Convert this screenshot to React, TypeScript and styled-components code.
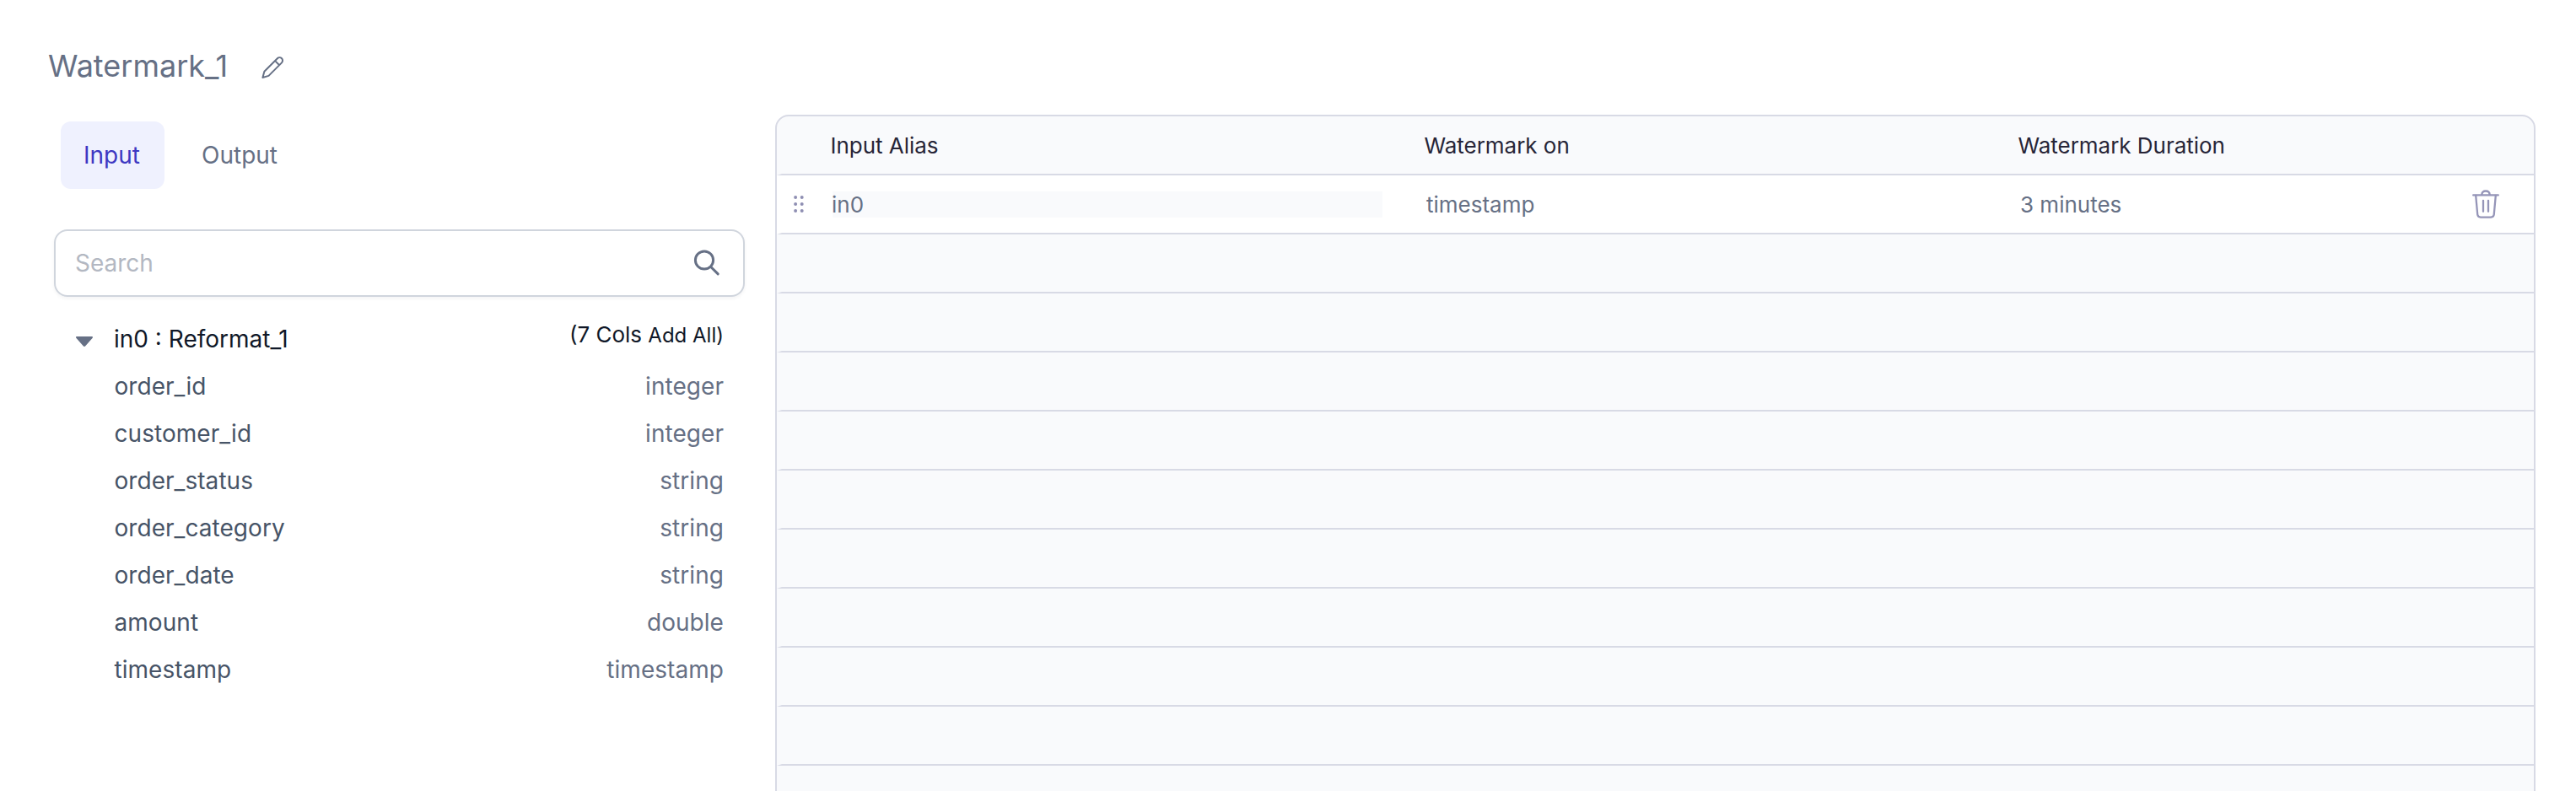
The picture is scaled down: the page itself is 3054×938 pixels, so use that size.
import React from "react";
import styled, { createGlobalStyle } from "styled-components";

const GlobalStyle = createGlobalStyle`
  * { box-sizing: border-box; }
  body { margin: 0; background: #fff; font-family: Inter, "Liberation Sans", sans-serif; }
`;

const Page = styled.main`
  display: flex;
  height: 938px;
  overflow: hidden;
  background: #fff;
`;
const Sidebar = styled.aside`
  width: 919px;
  flex: none;
  padding: 48px 36px 0 57px;
`;
const TitleBar = styled.header`
  display: flex;
  align-items: center;
  height: 60px;
`;
const Title = styled.h1`
  margin: 0;
  width: 252px;
  font-size: 36px;
  font-weight: 400;
  line-height: 60px;
  color: #667085;
`;
const EditButton = styled.button`
  display: flex;
  padding: 4px 0 0;
  border: 0;
  background: none;
`;
const Tabs = styled.nav`
  display: flex;
  gap: 17px;
  margin: 36px 0 0 15px;
`;
const Tab = styled.button<{ $active?: boolean }>`
  height: 80px;
  padding: 0 28px 0 27px;
  min-width: 123px;
  text-align: left;
  border: 0;
  border-radius: 12px;
  font: 400 28px/80px Inter, sans-serif;
  color: ${(p) => (p.$active ? "#3d38c2" : "#667085")};
  background: ${(p) => (p.$active ? "#eff1fe" : "transparent")};
`;
const SearchBox = styled.label`
  display: flex;
  align-items: center;
  justify-content: space-between;
  width: 819px;
  height: 80px;
  margin: 48px 0 22px 7px;
  padding: 0 27px 0 23px;
  border: 2px solid #d0d5dd;
  border-radius: 16px;
  box-shadow: 0 2px 4px rgba(16, 24, 40, 0.05);
`;
const SearchInput = styled.input`
  flex: 1;
  min-width: 0;
  padding: 0;
  border: 0;
  outline: 0;
  font: 400 28px/40px Inter, sans-serif;
  color: #101828;
  &::placeholder { color: #b3b8c2; opacity: 1; }
`;
const Tree = styled.section`
  margin: 0 0 0 33px;
  width: 768px;
  font-size: 28px;
`;
const TreeRow = styled.div`
  display: flex;
  height: 56px;
  line-height: 56px;
`;
const Toggle = styled.span`
  display: flex;
  align-items: center;
  width: 45px;
  padding-top: 6px;
`;
const SourceName = styled.span`
  flex: 1;
  color: #101828;
`;
const Summary = styled.span`
  height: 45px;
  font-size: 26px;
  line-height: 45px;
  color: #101828;
`;
const AddAll = styled.span`
  font-size: 24px;
`;
const FieldName = styled.span`
  flex: 1;
  padding-left: 45.5px;
  letter-spacing: 0.05px;
  color: #475467;
`;
const FieldType = styled.span`
  letter-spacing: 0.05px;
  color: #667085;
`;
const Table = styled.section`
  width: 2087px;
  height: 820px;
  flex: none;
  margin-top: 136px;
  border: 2px solid #d8dae5;
  border-radius: 16px;
  background: #f9fafc;
  overflow: hidden;
  font-size: 26px;
`;
const Row = styled.div<{ $filled?: boolean }>`
  display: grid;
  grid-template-columns: 57px 704px 704px 539px 1fr;
  align-items: center;
  height: 70px;
  border-bottom: 2px solid #d8dae5;
  border-left: 6px solid transparent;
  background: ${(p) => (p.$filled ? "#fff" : "transparent")};
`;
const HeadCell = styled.span`
  letter-spacing: -0.03px;
  padding-left: 0.5px;
  color: #272537;
`;
const Cell = styled.span`
  padding-left: 3px;
  color: #667085;
`;
const AliasValue = styled.span`
  display: block;
  width: 652px;
  height: 31px;
  margin-left: 3px;
  line-height: 31px;
  text-indent: -1px;
  color: #667085;
  background: #f9fafc;
`;
const Handle = styled.span`
  display: flex;
  padding-left: 14px;
`;
const DeleteButton = styled.button`
  display: flex;
  padding: 0;
  border: 0;
  background: none;
`;

const PencilIcon = () => (
  <svg width="28" height="28" viewBox="0 0 28 28" fill="none" stroke="#667085" strokeWidth="2" strokeLinejoin="round">
    <path d="M2.4 26 4.4 18.8 19.9 3.3a3.6 3.6 0 0 1 5.1 5.1L9.5 23.9 2.4 26ZM17.1 6.1l5.1 5.1" />
  </svg>
);
const SearchIcon = () => (
  <svg width="32" height="32" viewBox="0 0 32 32" fill="none" stroke="#667085" strokeWidth="3" strokeLinecap="round">
    <circle cx="13" cy="12.5" r="10.6" />
    <path d="m21 20.7 8.2 8.2" />
  </svg>
);
const CaretIcon = () => (
  <svg width="20" height="12" viewBox="0 0 20 12" fill="#667085">
    <path d="M1 0h18c1 0 1.3 1.4.5 2.1l-8.2 9.2c-.7.8-1.9.8-2.6 0L.5 2.1C-.3 1.4 0 0 1 0Z" />
  </svg>
);
const HandleIcon = () => (
  <svg width="12" height="20" viewBox="0 0 12 20" fill="#8f8fb3">
    {[2, 10, 18].map((y) => (
      <g key={y}>
        <circle cx="2.1" cy={y} r="2" />
        <circle cx="9.7" cy={y} r="2" />
      </g>
    ))}
  </svg>
);
const TrashIcon = () => (
  <svg width="32" height="34" viewBox="0 0 32 34" fill="none" stroke="#9595b8" strokeWidth="2.3" strokeLinecap="round" strokeLinejoin="round">
    <path d="M1.2 6.4h29.6M11.2 6C11.5 3 13.4 1.5 16 1.5S20.5 3 20.8 6" />
    <path d="m4.2 6.8 2 22.2c.2 2.2 1.5 3.6 3.6 3.6h12.4c2.1 0 3.4-1.4 3.6-3.6l2-22.2M13 12.8v13M19 12.8v13" />
  </svg>
);

const fields = [
  ["order_id", "integer"],
  ["customer_id", "integer"],
  ["order_status", "string"],
  ["order_category", "string"],
  ["order_date", "string"],
  ["amount", "double"],
  ["timestamp", "timestamp"],
];

export default function App() {
  return (
    <Page>
      <GlobalStyle />
      <Sidebar>
        <TitleBar>
          <Title>Watermark_1</Title>
          <EditButton aria-label="Rename"><PencilIcon /></EditButton>
        </TitleBar>
        <Tabs>
          <Tab $active>Input</Tab>
          <Tab>Output</Tab>
        </Tabs>
        <SearchBox>
          <SearchInput placeholder="Search" />
          <SearchIcon />
        </SearchBox>
        <Tree>
          <TreeRow>
            <Toggle><CaretIcon /></Toggle>
            <SourceName>in0 : Reformat_1</SourceName>
            <Summary>(7 Cols <AddAll>Add All)</AddAll></Summary>
          </TreeRow>
          {fields.map(([name, type]) => (
            <TreeRow key={name}>
              <FieldName>{name}</FieldName>
              <FieldType>{type}</FieldType>
            </TreeRow>
          ))}
        </Tree>
      </Sidebar>
      <Table>
        <Row>
          <span />
          <HeadCell>Input Alias</HeadCell>
          <HeadCell>Watermark on</HeadCell>
          <HeadCell>Watermark Duration</HeadCell>
        </Row>
        <Row $filled>
          <Handle><HandleIcon /></Handle>
          <AliasValue>in0</AliasValue>
          <Cell>timestamp</Cell>
          <Cell>3 minutes</Cell>
          <DeleteButton aria-label="Delete"><TrashIcon /></DeleteButton>
        </Row>
        {Array.from({ length: 10 }, (_, i) => <Row key={i} />)}
      </Table>
    </Page>
  );
}
